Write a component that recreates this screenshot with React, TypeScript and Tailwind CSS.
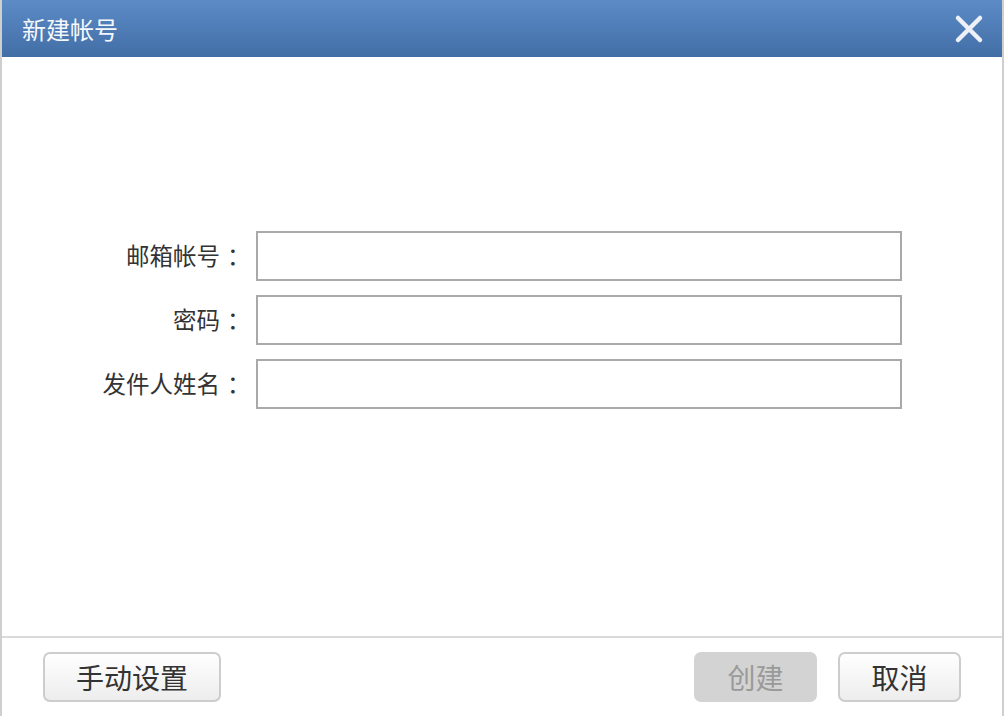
import React from 'react';

const fields = ['邮箱帐号', '密码', '发件人姓名'];

const CloseIcon = () => (
  <svg width="30" height="30" viewBox="0 0 30 30" className="block">
    <path d="M4 4 L26 26 M26 4 L4 26" stroke="#edf1f7" strokeWidth="4.5" strokeLinecap="round" />
  </svg>
);

export default function App() {
  return (
    <div
      className="w-[1004px] h-[716px] flex flex-col bg-white border-l-2 border-r-2 border-[#cfcfcf] overflow-hidden"
      style={{ fontFamily: '"Noto Sans CJK SC", "Noto Sans", sans-serif' }}
    >
      {/* title bar */}
      <div className="h-[57px] shrink-0 flex items-center justify-between pl-[20px] pr-[18px] bg-gradient-to-b from-[#5c8bc6] to-[#426ea6]">
        <span className="text-[24px] text-[#f4f7fb] leading-none">新建帐号</span>
        <button className="flex items-center justify-center">
          <CloseIcon />
        </button>
      </div>

      {/* form */}
      <div className="flex-1 flex flex-col gap-[14px] pt-[174px]">
        {fields.map(label => (
          <div key={label} className="flex items-center">
            <label className="w-[218px] text-right text-[23.5px] text-[#333] leading-none">{label}</label>
            <span className="w-[36px] pl-[7px] text-[23.5px] text-[#333] leading-none">：</span>
            <input
              type="text"
              className="w-[646px] h-[50px] border-2 border-[#a9a9a9] bg-white outline-none"
            />
          </div>
        ))}
      </div>

      {/* footer */}
      <div className="h-[80px] shrink-0 border-t-2 border-[#dadada] flex items-center justify-between pl-[41px] pr-[41px]">
        <button className="w-[178px] h-[50px] rounded-[7px] border-2 border-[#cdcdcd] bg-gradient-to-b from-white to-[#ededed] text-[28px] text-[#333] leading-none">
          手动设置
        </button>
        <div className="flex gap-[21px]">
          <button className="w-[123px] h-[50px] rounded-[7px] bg-[#d3d3d3] text-[28px] text-[#9a9a9a] leading-none">
            创建
          </button>
          <button className="w-[123px] h-[50px] rounded-[7px] border-2 border-[#cdcdcd] bg-gradient-to-b from-white to-[#ededed] text-[28px] text-[#333] leading-none">
            取消
          </button>
        </div>
      </div>
    </div>
  );
}
